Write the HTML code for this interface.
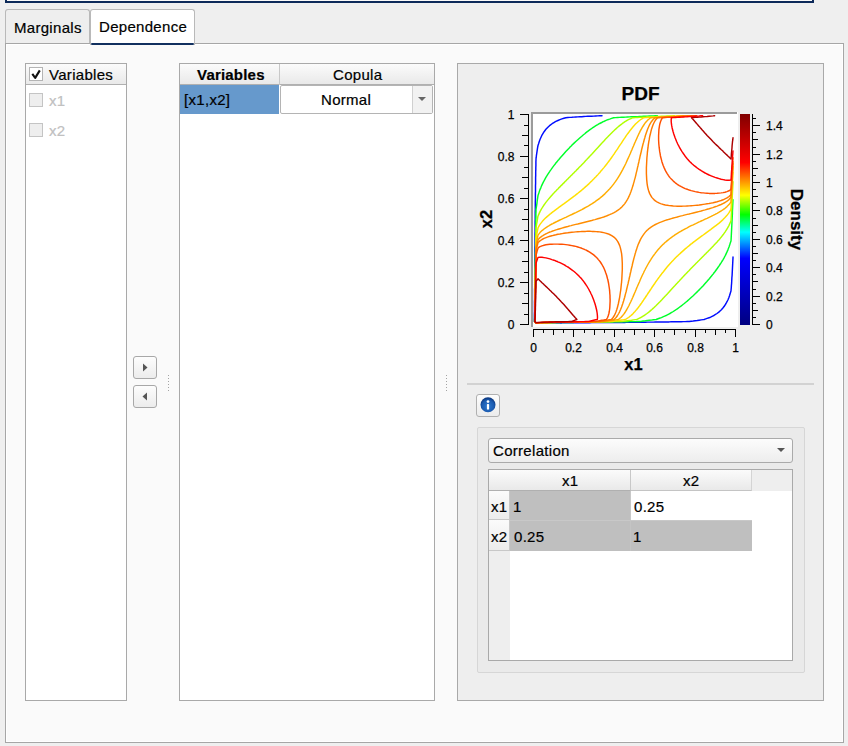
<!DOCTYPE html>
<html><head><meta charset="utf-8">
<style>
html,body{margin:0;padding:0}
body{width:848px;height:746px;overflow:hidden;background:#efefef;position:relative;font-family:"Liberation Sans",sans-serif;font-size:15px;color:#000}
.a{position:absolute;box-sizing:border-box}
.t{position:absolute;white-space:nowrap;line-height:1;letter-spacing:0.3px;-webkit-text-stroke:0.2px currentColor}
</style></head><body>
<!-- top navy frame -->
<div class="a" style="left:5px;top:-20px;width:809px;height:23px;border:2px solid #0d2a5a;background:#fafafa"></div>
<!-- tabs -->
<div class="a" style="left:5px;top:9px;width:85px;height:35px;background:#eeeeee;border:1px solid #b9b9b9;border-bottom:none;border-radius:3px 3px 0 0"></div>
<div class="t" style="left:14px;top:20px">Marginals</div>
<!-- panel -->
<div class="a" style="left:5px;top:43px;width:839px;height:700px;background:#fafafa;border:1px solid #a6a6a6;box-shadow:inset 0 0 0 1px #ffffff"></div>
<div class="a" style="left:90px;top:9px;width:105px;height:36px;background:#ffffff;border:1px solid #b9b9b9;border-bottom:none;border-radius:3px 3px 0 0"></div>
<div class="a" style="left:91px;top:42.5px;width:103px;height:2.5px;background:#12305f;border-radius:1px"></div>
<div class="t" style="left:99px;top:19px">Dependence</div>

<!-- left list -->
<div class="a" style="left:25px;top:63px;width:102px;height:638px;background:#fff;border:1px solid #a9a9a9"></div>
<div class="a" style="left:26px;top:64px;width:100px;height:21px;background:linear-gradient(#fbfbfb,#e9e9e9);border-bottom:1px solid #b0b0b0"></div>
<div class="a" style="left:29px;top:67px;width:14px;height:14px;background:#fff;border:1px solid #b4b4b4"></div>
<svg class="a" style="left:29px;top:67px" width="14" height="14"><path d="M3.3 6.9 L6.2 10.9 L10.8 3.4" fill="none" stroke="#111" stroke-width="2.1" stroke-linejoin="round"/></svg>
<div class="t" style="left:49px;top:67px">Variables</div>
<div class="a" style="left:29px;top:93px;width:14px;height:14px;background:#eeeeee;border:1px solid #c4c4c4"></div>
<div class="t" style="left:49px;top:93px;color:#c0c0c0">x1</div>
<div class="a" style="left:29px;top:123px;width:14px;height:14px;background:#eeeeee;border:1px solid #c4c4c4"></div>
<div class="t" style="left:49px;top:123px;color:#c0c0c0">x2</div>

<!-- arrow buttons -->
<div class="a" style="left:133px;top:356px;width:24px;height:23px;border:1px solid #a8a8a8;border-radius:3px;background:linear-gradient(#fdfdfd,#ececec)"></div>
<svg class="a" style="left:133px;top:356px" width="24" height="23"><path d="M10 7.5 L14.5 11.5 L10 15.5Z" fill="#555"/></svg>
<div class="a" style="left:133px;top:385px;width:24px;height:23px;border:1px solid #a8a8a8;border-radius:3px;background:linear-gradient(#fdfdfd,#ececec)"></div>
<svg class="a" style="left:133px;top:385px" width="24" height="23"><path d="M14 7.5 L9.5 11.5 L14 15.5Z" fill="#555"/></svg>
<svg class="a" style="left:166px;top:374px" width="4" height="20"><g fill="#a4a4a4"><rect x="2" y="1" width="1" height="1"/><rect x="2" y="4" width="1" height="1"/><rect x="2" y="7" width="1" height="1"/><rect x="2" y="10" width="1" height="1"/><rect x="2" y="13" width="1" height="1"/><rect x="2" y="16" width="1" height="1"/></g></svg>

<!-- middle table -->
<div class="a" style="left:179px;top:63px;width:256px;height:638px;background:#fff;border:1px solid #a9a9a9"></div>
<div class="a" style="left:180px;top:64px;width:254px;height:21px;background:linear-gradient(#fbfbfb,#e9e9e9);border-bottom:1px solid #b0b0b0"></div>
<div class="a" style="left:279px;top:64px;width:1px;height:21px;background:#c8c8c8"></div>
<div class="t" style="left:197px;top:67px;font-weight:bold;color:#000;letter-spacing:0.2px">Variables</div>
<div class="t" style="left:333px;top:67px">Copula</div>
<div class="a" style="left:180px;top:85px;width:99px;height:29px;background:#6699cc"></div>
<div class="t" style="left:184px;top:92px;color:#000">[x1,x2]</div>
<div class="a" style="left:280px;top:85px;width:153px;height:29px;background:#fff;border:1px solid #b4b4b4;border-radius:2px"></div>
<div class="a" style="left:412px;top:86px;width:1px;height:27px;background:#d0d0d0"></div>
<div class="a" style="left:413px;top:86px;width:19px;height:27px;background:#f2f2f2"></div>
<svg class="a" style="left:413px;top:86px" width="19" height="27"><path d="M5 11 L13 11 L9 15Z" fill="#666"/></svg>
<div class="t" style="left:321px;top:92px;color:#000">Normal</div>
<svg class="a" style="left:444px;top:374px" width="4" height="20"><g fill="#a4a4a4"><rect x="2" y="1" width="1" height="1"/><rect x="2" y="4" width="1" height="1"/><rect x="2" y="7" width="1" height="1"/><rect x="2" y="10" width="1" height="1"/><rect x="2" y="13" width="1" height="1"/><rect x="2" y="16" width="1" height="1"/></g></svg>

<!-- right group -->
<div class="a" style="left:457px;top:63px;width:367px;height:638px;background:#eeeeee;border:1px solid #a9a9a9"></div>
<!-- splitter line -->
<div class="a" style="left:467px;top:383px;width:347px;height:2px;background:#d2d2d2"></div>
<!-- info button -->
<div class="a" style="left:476px;top:394px;width:24px;height:23px;border:1px solid #b0b0b0;border-radius:3px;background:linear-gradient(#fdfdfd,#ececec)"></div>
<svg class="a" style="left:476px;top:394px" width="24" height="23"><defs><radialGradient id="ig" cx="0.5" cy="0.6" r="0.55"><stop offset="0" stop-color="#2f7ad0"/><stop offset="0.75" stop-color="#1b5aae"/><stop offset="1" stop-color="#0c3a84"/></radialGradient></defs><circle cx="12" cy="10.8" r="7.5" fill="url(#ig)"/><circle cx="12" cy="7.6" r="1.35" fill="#fff"/><rect x="10.9" y="10.1" width="2.2" height="5.4" rx="0.6" fill="#fff"/></svg>
<!-- correlation group -->
<div class="a" style="left:477px;top:427px;width:328px;height:246px;background:#eaeaea;border:1px solid #d6d6d6;border-radius:2px"></div>
<div class="a" style="left:488px;top:438px;width:305px;height:25px;border:1px solid #aaaaaa;border-radius:3px;background:linear-gradient(#fcfcfc,#ededed)"></div>
<div class="t" style="left:493px;top:443px;color:#000">Correlation</div>
<svg class="a" style="left:770px;top:440px" width="20" height="20"><path d="M7 8 L15 8 L11 12Z" fill="#555"/></svg>
<!-- corr table -->
<div class="a" style="left:488px;top:469px;width:305px;height:192px;background:#fff;border:1px solid #a9a9a9"></div>
<div class="a" style="left:489px;top:470px;width:303px;height:21px;background:#eeeeee"></div>
<div class="a" style="left:489px;top:470px;width:21px;height:21px;background:linear-gradient(#fbfbfb,#e9e9e9);border-bottom:1px solid #b0b0b0"></div>
<div class="a" style="left:489px;top:491px;width:21px;height:169px;background:#eeeeee"></div>
<div class="a" style="left:510px;top:470px;width:121px;height:21px;background:linear-gradient(#fbfbfb,#e9e9e9);border-right:1px solid #c8c8c8;border-bottom:1px solid #b0b0b0"></div>
<div class="a" style="left:631px;top:470px;width:121px;height:21px;background:linear-gradient(#fbfbfb,#e9e9e9);border-right:1px solid #d4d4d4;border-bottom:1px solid #c4c4c4"></div>
<div class="a" style="left:489px;top:491px;width:21px;height:29px;background:linear-gradient(#fbfbfb,#ececec);border-right:1px solid #c8c8c8;border-bottom:1px solid #c8c8c8"></div>
<div class="a" style="left:489px;top:520px;width:21px;height:31px;background:linear-gradient(#fbfbfb,#ececec);border-right:1px solid #c8c8c8;border-bottom:1px solid #c8c8c8"></div>
<div class="a" style="left:510px;top:491px;width:121px;height:29px;background:#bfbfbf;border-right:1px solid #c8c8c8"></div>
<div class="a" style="left:631px;top:491px;width:121px;height:29px;background:#ffffff"></div>
<div class="a" style="left:510px;top:520px;width:121px;height:31px;background:#bfbfbf;border-right:1px solid #c4c4c4;border-top:1px solid #c8c8c8"></div>
<div class="a" style="left:631px;top:520px;width:121px;height:31px;background:#bfbfbf;border-top:1px solid #c8c8c8"></div>
<div class="t" style="left:562px;top:473px;color:#000">x1</div>
<div class="t" style="left:683px;top:473px;color:#000">x2</div>
<div class="t" style="left:491px;top:499px;color:#000">x1</div>
<div class="t" style="left:491px;top:529px;color:#000">x2</div>
<div class="t" style="left:513px;top:499px;color:#000">1</div>
<div class="t" style="left:634px;top:499px;color:#000">0.25</div>
<div class="t" style="left:514px;top:529px;color:#000">0.25</div>
<div class="t" style="left:633px;top:529px;color:#000">1</div>

<!-- plot -->
<svg class="a" style="left:0;top:0" width="848" height="746">
<defs><linearGradient id="cb" x1="0" y1="1" x2="0" y2="0"><stop offset="0" stop-color="rgb(0,0,128)"/><stop offset="0.316" stop-color="rgb(0,0,255)"/><stop offset="0.44" stop-color="rgb(0,255,255)"/><stop offset="0.523" stop-color="rgb(0,255,0)"/><stop offset="0.615" stop-color="rgb(255,255,0)"/><stop offset="0.77" stop-color="rgb(255,0,0)"/><stop offset="1" stop-color="rgb(128,0,0)"/></linearGradient></defs>
<rect x="531" y="112" width="207" height="215" fill="#fff"/>
<rect x="531" y="112" width="2" height="215" fill="#9b9b9b"/>
<rect x="531" y="112" width="206" height="2" fill="#9b9b9b"/>
<g fill="none" stroke-width="1.45" stroke-linejoin="round" stroke-linecap="round"><path stroke="#000dff" d="M602 115.7 599.7 115.8 597.7 115.9 595.7 116 593.7 116.1 591.7 116.2 589.7 116.2 587.7 116.3 585.7 116.4 583.8 116.5 581.8 116.7 579.8 116.8 577.8 116.9 575.8 117 573.8 117.1 571.8 117.3 569.8 117.4 567.8 117.5 565.8 117.7 563.9 118.3 561.9 118.9 559.9 119.6 557.9 120.5 555.9 121.4 555.4 121.7 553.9 122.6 552.1 123.7 549.9 125.4 549.5 125.7 547.9 127.2 547.4 127.7 545.9 129.3 544.1 131.7 542.9 133.7 542 135.2 541.7 135.7 540.8 137.7 540 139.5 539.2 141.7 538.6 143.7 538 145.5 537.6 147.7 537.3 149.7 537 151.7 536.7 153.7 536.4 155.7 536.2 157.7 536 158.8 536 159.7 535.9 161.7 535.9 163.7 535.9 165.7 535.8 167.6 535.8 169.6 535.7 171.6 535.7 173.6 535.7 175.6 535.6 177.6 535.6 179.6 535.6 181.6 535.6 183.6 535.5 185.6 535.5 187.6 535.5 189.6 535.5 191.6 535.4 193.6 535.4 195.6 535.4 197.6 535.4 199.6 535.3 201.6 535.3 203.6 535.3 205.6 535.3 207.6 535.3 209.6 535.2 211.6 535.2 213.6 535.2 215.6 535.2 217.6 535.2 219.6 535.1 221.6 535.1 223.6 535.1 225.6 535.1 227.6 535.1 229.6 535.1 231.6 535 233.6 535 235.6 535 237.6 535 239.6 535 241.6 535 243.6 535 245.6 534.9 247.6 534.9 249.6 534.9 251.6 534.9 253.6 534.9 255.6 534.9 257.6 534.8 259.6 534.8 261.5 534.8 263.5 534.8 265.5 534.8 267.5 534.8 269.5 534.8 271.5 534.8 273.5 534.7 275.5 534.7 277.5 534.7 279.5 534.7 281.5 534.7 283.5 534.7 285.5 534.7 287.5 534.6 289.5 534.6 291.5 534.6 293.5 534.6 295.5 534.6 297.5 534.6 299.5 534.5 301.5 534.5 303.5 534.5 305.5 534.5 307.5 534.5 309.5 534.5 311.5 534.4 313.5 534.4 315.5 534.4 317.5 534.3 319.5 534.3 321.5 536 323.2 538 323.1 540 323.1 542 323.1 544 323 545.9 323 547.9 323 549.9 323 551.9 322.9 553.9 322.9 555.9 322.9 557.9 322.9 559.9 322.9 561.9 322.9 563.9 322.8 565.8 322.8 567.8 322.8 569.8 322.8 571.8 322.8 573.8 322.8 575.8 322.8 577.8 322.7 579.8 322.7 581.8 322.7 583.8 322.7 585.7 322.7 587.7 322.7 589.7 322.7 591.7 322.6 593.7 322.6 595.7 322.6 597.7 322.6 599.7 322.6 601.7 322.6 603.7 322.5 605.6 322.5 607.6 322.5 609.6 322.5 611.6 322.5 613.6 322.5 615.6 322.4 617.6 322.4 619.6 322.4 621.6 322.4 623.6 322.4 625.5 322.4 627.5 322.3 629.5 322.3 631.5 322.3 633.5 322.3 635.5 322.3 637.5 322.2 639.5 322.2 641.5 322.2 643.5 322.2 645.4 322.2 647.4 322.1 649.4 322.1 651.4 322.1 653.4 322.1 655.4 322 657.4 322 659.4 322 661.4 322 663.4 321.9 665.3 321.9 667.3 321.9 669.3 321.9 671.3 321.8 673.3 321.8 675.3 321.8 677.3 321.7 679.3 321.7 681.3 321.7 683.3 321.6 685.2 321.6 687.2 321.5 689.2 321.5 691.2 321.2 693.2 321 695.2 320.7 697.2 320.5 699.2 320.2 701.2 319.9 703.2 319.6 704.1 319.5 705.1 319.1 707.1 318.4 709.1 317.7 709.8 317.5 711.1 316.9 713.1 315.9 713.9 315.5 715.1 314.7 717 313.5 719.1 311.9 719.5 311.5 721.1 310 721.6 309.5 723.1 307.8 724.8 305.5 725 305.1 726 303.5 727 301.7 728.1 299.5 728.9 297.5 729.6 295.5 730.2 293.5 730.8 291.5 731 291 731.1 289.5 731.3 287.5 731.4 285.5 731.6 283.5 731.7 281.5 731.8 279.5 731.9 277.5 732.1 275.5 732.2 273.5 732.3 271.5 732.4 269.5 732.5 267.5 732.6 265.5 732.7 263.5 732.8 261.5 732.9 259.6 733 257.6 733 256.9"/><path stroke="#00ff2a" d="M657.4 115.7 655.4 115.8 653.4 115.9 651.4 116 649.4 116 647.4 116.1 645.4 116.2 643.5 116.3 641.5 116.4 639.5 116.5 637.5 116.6 635.5 116.7 633.5 116.7 631.5 116.8 629.5 116.9 627.5 117 625.5 117.1 623.6 117.2 621.6 117.3 619.6 117.4 617.6 117.5 615.6 117.6 613.6 117.7 611.6 118.4 609.6 119.1 607.7 119.7 605.6 120.6 603.7 121.5 603.2 121.7 601.7 122.5 599.7 123.5 599.3 123.7 597.7 124.7 595.9 125.7 593.7 127.1 592.8 127.7 591.7 128.5 590 129.7 587.7 131.4 587.3 131.7 585.7 132.9 584.8 133.7 583.8 134.5 582.3 135.7 581.8 136.2 580 137.7 577.8 139.7 575.8 141.5 573.8 143.4 571.8 145.3 571.5 145.7 569.8 147.3 569.5 147.7 567.8 149.4 565.8 151.5 563.9 153.7 562.1 155.7 560.3 157.7 559.9 158.2 558.7 159.7 557.9 160.6 557 161.7 555.9 163 555.4 163.7 553.9 165.6 552.4 167.6 551.9 168.3 551 169.6 549.9 171.1 549.6 171.6 548.3 173.6 547.9 174.2 547 175.6 545.9 177.4 544.7 179.6 544 180.9 543.6 181.6 542.6 183.6 542 184.9 541.7 185.6 540.9 187.6 540 189.6 539.3 191.6 538.7 193.6 538 195.6 537.7 197.6 537.4 199.6 537.1 201.6 536.9 203.6 536.6 205.6 536.3 207.6 536 209.4 536 211.6 535.9 213.6 535.9 215.6 535.9 217.6 535.8 219.6 535.8 221.6 535.8 223.6 535.8 225.6 535.7 227.6 535.7 229.6 535.7 231.6 535.7 233.6 535.6 235.6 535.6 237.6 535.6 239.6 535.6 241.6 535.5 243.6 535.5 245.6 535.5 247.6 535.5 249.6 535.4 251.6 535.4 253.6 535.4 255.6 535.4 257.6 535.3 259.6 535.3 261.5 535.3 263.5 535.3 265.5 535.3 267.5 535.2 269.5 535.2 271.5 535.2 273.5 535.2 275.5 535.1 277.5 535.1 279.5 535.1 281.5 535.1 283.5 535.1 285.5 535 287.5 535 289.5 535 291.5 535 293.5 534.9 295.5 534.9 297.5 534.9 299.5 534.9 301.5 534.8 303.5 534.8 305.5 534.8 307.5 534.8 309.5 534.7 311.5 534.7 313.5 534.6 315.5 534.6 317.5 534.6 319.5 534.5 321.5 536 323 538 322.9 540 322.9 542 322.8 544 322.8 545.9 322.7 547.9 322.7 549.9 322.7 551.9 322.6 553.9 322.6 555.9 322.6 557.9 322.6 559.9 322.5 561.9 322.5 563.9 322.5 565.8 322.4 567.8 322.4 569.8 322.4 571.8 322.4 573.8 322.4 575.8 322.3 577.8 322.3 579.8 322.3 581.8 322.3 583.8 322.2 585.7 322.2 587.7 322.2 589.7 322.2 591.7 322.1 593.7 322.1 595.7 322.1 597.7 322.1 599.7 322 601.7 322 603.7 322 605.6 322 607.6 321.9 609.6 321.9 611.6 321.9 613.6 321.9 615.6 321.8 617.6 321.8 619.6 321.8 621.6 321.8 623.6 321.7 625.5 321.7 627.5 321.7 629.5 321.6 631.5 321.6 633.5 321.6 635.5 321.6 637.5 321.5 639.5 321.5 641.5 321.3 643.5 321 645.4 320.8 647.4 320.5 649.4 320.3 651.4 320.1 653.4 319.8 655.4 319.6 656.2 319.5 657.4 319 659.4 318.3 661.4 317.6 663.4 316.7 665.3 315.8 666.1 315.5 667.3 314.9 669.3 313.8 669.9 313.5 671.3 312.7 673.3 311.5 675.3 310.2 676.3 309.5 677.3 308.8 679.1 307.5 681.3 305.9 681.8 305.5 683.3 304.3 684.3 303.5 685.2 302.7 686.7 301.5 687.2 301.1 689 299.5 691.2 297.5 693.2 295.7 695.2 293.8 697.2 291.9 697.5 291.5 699.2 289.9 699.5 289.5 701.2 287.8 703.2 285.7 705.1 283.5 706.9 281.5 708.6 279.5 709.1 279 710.3 277.5 711.1 276.6 711.9 275.5 713.1 274.1 713.5 273.5 715.1 271.5 716.5 269.5 717.1 268.8 717.9 267.5 719.1 265.9 720.6 263.5 721.1 262.9 721.9 261.5 723.1 259.6 724.2 257.6 725 256 725.3 255.6 726.2 253.6 727 251.9 728 249.6 728.8 247.6 729 247.1 729.5 245.6 730.1 243.6 730.8 241.6 731 241 731.1 239.6 731.2 237.6 731.3 235.6 731.4 233.6 731.5 231.6 731.6 229.6 731.7 227.6 731.8 225.6 731.9 223.6 732 221.6 732.1 219.6 732.2 217.6 732.3 215.6 732.4 213.6 732.4 211.6 732.5 209.6 732.6 207.6 732.7 205.6 732.8 203.6 732.9 201.6 733 199.7"/><path stroke="#b0ff00" d="M674.3 115.7 673.3 115.8 671.3 115.9 669.3 115.9 667.3 116 665.3 116.1 663.4 116.2 661.4 116.3 659.4 116.4 657.4 116.5 655.4 116.6 653.4 116.7 651.4 116.8 649.4 116.9 647.4 117 645.4 117.1 643.5 117.2 641.5 117.3 639.5 117.4 637.5 117.5 635.5 117.6 633.5 117.7 632.7 117.7 631.5 118.3 629.5 119.2 628.4 119.7 627.5 120.2 625.5 121.4 625 121.7 623.6 122.7 622.1 123.7 621.6 124.1 619.6 125.6 617.6 127.3 617.1 127.7 615.6 129.1 614.9 129.7 613.6 131 612.8 131.7 611.6 132.9 610.8 133.7 609.6 134.9 608.8 135.7 607.6 137 606.9 137.7 605.6 139.1 605 139.7 603.7 141.2 603.2 141.7 601.7 143.3 601.3 143.7 599.7 145.5 597.7 147.7 595.8 149.7 594 151.7 592.2 153.7 591.7 154.2 590.3 155.7 589.7 156.3 588.5 157.7 587.7 158.4 586.6 159.7 585.7 160.6 584.7 161.7 583.8 162.7 582.8 163.7 581.8 164.7 580.9 165.7 579.8 166.8 579 167.6 577.8 168.9 577 169.6 575.8 170.9 575.1 171.6 573.8 172.9 573.1 173.6 571.8 174.9 571.1 175.6 569.8 176.9 569.1 177.6 567.8 178.9 567.1 179.6 565.8 180.9 565.1 181.6 563.9 182.9 563.1 183.6 561.9 184.9 561.1 185.6 559.9 186.9 559.1 187.6 557.9 188.9 557.2 189.6 555.9 191 555.3 191.6 553.9 193.1 553.4 193.6 551.9 195.2 551.6 195.6 549.9 197.5 548.1 199.6 546.5 201.6 545.9 202.3 545 203.6 544 205 543.6 205.6 542.3 207.6 542 208 541.1 209.6 540 211.6 539.1 213.6 538.2 215.6 538 216 537.7 217.6 537.4 219.6 537.1 221.6 536.7 223.6 536.4 225.6 536 227.6 536 229.6 535.9 231.6 535.9 233.6 535.9 235.6 535.8 237.6 535.8 239.6 535.8 241.6 535.8 243.6 535.7 245.6 535.7 247.6 535.7 249.6 535.7 251.6 535.6 253.6 535.6 255.6 535.6 257.6 535.6 259.6 535.5 261.5 535.5 263.5 535.5 265.5 535.4 267.5 535.4 269.5 535.4 271.5 535.4 273.5 535.3 275.5 535.3 277.5 535.3 279.5 535.3 281.5 535.2 283.5 535.2 285.5 535.2 287.5 535.2 289.5 535.1 291.5 535.1 293.5 535.1 295.5 535.1 297.5 535 299.5 535 301.5 535 303.5 534.9 305.5 534.9 307.5 534.9 309.5 534.8 311.5 534.8 313.5 534.7 315.5 534.7 317.5 534.6 319.5 534.6 321.5 536 322.9 538 322.8 540 322.8 542 322.7 544 322.7 545.9 322.6 547.9 322.6 549.9 322.5 551.9 322.5 553.9 322.5 555.9 322.4 557.9 322.4 559.9 322.4 561.9 322.3 563.9 322.3 565.8 322.3 567.8 322.3 569.8 322.2 571.8 322.2 573.8 322.2 575.8 322.2 577.8 322.1 579.8 322.1 581.8 322.1 583.8 322 585.7 322 587.7 322 589.7 322 591.7 321.9 593.7 321.9 595.7 321.9 597.7 321.8 599.7 321.8 601.7 321.8 603.7 321.8 605.6 321.7 607.6 321.7 609.6 321.7 611.6 321.6 613.6 321.6 615.6 321.6 617.6 321.6 619.6 321.5 621.6 321.5 623.6 321.3 625.5 321 627.5 320.7 629.5 320.4 631.5 320.2 633.5 319.9 635.5 319.6 636.7 319.5 637.5 319.1 639.5 318.1 640.9 317.5 641.5 317.1 643.5 315.9 644.2 315.5 645.4 314.6 647 313.5 647.4 313.2 649.4 311.6 651.4 309.9 651.9 309.5 653.4 308.1 654.1 307.5 655.4 306.2 656.2 305.5 657.4 304.3 658.2 303.5 659.4 302.3 660.2 301.5 661.4 300.2 662.1 299.5 663.4 298.1 663.9 297.5 665.3 296 665.8 295.5 667.3 293.9 667.7 293.5 669.3 291.7 671.3 289.5 673.1 287.5 675 285.5 676.8 283.5 677.3 283 678.7 281.5 679.3 280.9 680.5 279.5 681.3 278.7 682.4 277.5 683.3 276.6 684.3 275.5 685.2 274.5 686.2 273.5 687.2 272.4 688.1 271.5 689.2 270.4 690 269.5 691.2 268.3 692 267.5 693.2 266.3 694 265.5 695.2 264.3 695.9 263.5 697.2 262.3 697.9 261.5 699.2 260.3 699.9 259.6 701.2 258.3 701.9 257.6 703.2 256.3 703.9 255.6 705.1 254.3 705.9 253.6 707.1 252.3 707.9 251.6 709.1 250.3 709.9 249.6 711.1 248.3 711.8 247.6 713.1 246.2 713.7 245.6 715.1 244.1 715.6 243.6 717.1 242 717.4 241.6 719.1 239.7 720.8 237.6 721.1 237.3 722.4 235.6 723.1 234.8 723.9 233.6 725 232.1 725.3 231.6 726.6 229.6 727 229 727.8 227.6 728.9 225.6 729.8 223.6 730.7 221.6 731 220.9 731.1 219.6 731.2 217.6 731.3 215.6 731.4 213.6 731.5 211.6 731.6 209.6 731.7 207.6 731.8 205.6 731.9 203.6 732 201.6 732.1 199.6 732.2 197.6 732.3 195.6 732.4 193.6 732.5 191.6 732.6 189.6 732.7 187.6 732.8 185.6 732.9 183.6 733 181.8"/><path stroke="#ffe000" d="M683.1 115.7 681.3 115.8 679.3 115.9 677.3 116 675.3 116.1 673.3 116.2 671.3 116.3 669.3 116.4 667.3 116.5 665.3 116.6 663.4 116.7 661.4 116.8 659.4 116.9 657.4 117 655.4 117.1 653.4 117.2 651.4 117.3 649.4 117.4 647.4 117.5 645.4 117.6 643.7 117.7 641.5 119.1 640.5 119.7 639.5 120.5 638 121.7 637.5 122.2 635.8 123.7 635.5 124.1 634 125.7 633.5 126.3 632.3 127.7 631.5 128.7 630.7 129.7 629.5 131.2 629.2 131.7 627.7 133.7 626.3 135.7 625.5 136.8 625 137.7 623.6 139.7 622.3 141.7 621.6 142.8 621 143.7 619.6 145.7 618.3 147.7 617.6 148.8 617 149.7 615.6 151.7 614.3 153.7 613.6 154.6 612.9 155.7 611.6 157.5 610 159.7 609.6 160.2 608.5 161.7 607.6 162.9 607 163.7 605.6 165.5 603.9 167.6 602.2 169.6 601.7 170.3 600.5 171.6 599.7 172.7 598.8 173.6 597.7 174.9 597 175.6 595.7 177 595.1 177.6 593.7 179.1 593.2 179.6 591.7 181.1 591.1 181.6 589.7 183 589.1 183.6 587.7 184.9 586.9 185.6 585.7 186.6 584.6 187.6 583.8 188.4 582.3 189.6 581.8 190.1 579.9 191.6 577.8 193.3 577.4 193.6 575.8 194.9 574.9 195.6 573.8 196.4 572.2 197.6 571.8 197.9 569.8 199.4 567.8 200.9 566.8 201.6 565.8 202.3 564.1 203.6 561.9 205.2 561.3 205.6 559.9 206.6 558.5 207.6 557.9 208.1 555.9 209.6 553.9 211.1 553.2 211.6 551.9 212.6 550.7 213.6 549.9 214.2 548.3 215.6 547.9 215.9 546 217.6 544 219.6 542.2 221.6 540.6 223.6 540 224.4 539.3 225.6 538.1 227.6 537.7 229.6 537.3 231.6 536.9 233.6 536.5 235.6 536.1 237.6 536 239.6 535.9 241.6 535.9 243.6 535.9 245.6 535.9 247.6 535.8 249.6 535.8 251.6 535.8 253.6 535.7 255.6 535.7 257.6 535.7 259.6 535.7 261.5 535.6 263.5 535.6 265.5 535.6 267.5 535.5 269.5 535.5 271.5 535.5 273.5 535.5 275.5 535.4 277.5 535.4 279.5 535.4 281.5 535.3 283.5 535.3 285.5 535.3 287.5 535.3 289.5 535.2 291.5 535.2 293.5 535.2 295.5 535.1 297.5 535.1 299.5 535.1 301.5 535.1 303.5 535 305.5 535 307.5 534.9 309.5 534.9 311.5 534.9 313.5 534.8 315.5 534.8 317.5 534.7 319.5 534.6 321.5 536 322.8 538 322.8 540 322.7 542 322.6 544 322.6 545.9 322.5 547.9 322.5 549.9 322.5 551.9 322.4 553.9 322.4 555.9 322.4 557.9 322.3 559.9 322.3 561.9 322.3 563.9 322.2 565.8 322.2 567.8 322.2 569.8 322.1 571.8 322.1 573.8 322.1 575.8 322 577.8 322 579.8 322 581.8 322 583.8 321.9 585.7 321.9 587.7 321.9 589.7 321.8 591.7 321.8 593.7 321.8 595.7 321.7 597.7 321.7 599.7 321.7 601.7 321.7 603.7 321.6 605.6 321.6 607.6 321.6 609.6 321.5 611.6 321.5 612.2 321.5 613.6 321.3 615.6 320.9 617.6 320.6 619.6 320.3 621.6 320 623.6 319.8 625.5 319.5 627.5 318.2 628.6 317.5 629.5 316.7 631.1 315.5 631.5 315.1 633.2 313.5 633.5 313.1 635 311.5 635.5 310.9 636.7 309.5 637.5 308.5 638.3 307.5 639.5 305.9 639.8 305.5 641.2 303.5 641.5 303.1 642.6 301.5 643.5 300.2 643.9 299.5 645.3 297.5 646.6 295.5 647.4 294.3 647.9 293.5 649.3 291.5 650.6 289.5 651.4 288.3 651.9 287.5 653.3 285.5 654.7 283.5 655.4 282.4 656 281.5 657.4 279.6 658.9 277.5 659.4 276.9 660.4 275.5 661.4 274.2 661.9 273.5 663.4 271.7 665.1 269.5 666.7 267.5 667.3 266.8 668.4 265.5 669.3 264.5 670.2 263.5 671.3 262.3 672 261.5 673.3 260.2 673.9 259.6 675.3 258.1 675.8 257.6 677.3 256.1 677.9 255.6 679.3 254.2 680 253.6 681.3 252.4 682.2 251.6 683.3 250.6 684.4 249.6 685.2 248.9 686.8 247.6 687.2 247.2 689.2 245.6 691.2 243.9 691.7 243.6 693.2 242.4 694.2 241.6 695.2 240.9 696.9 239.6 699.2 237.9 699.6 237.6 701.2 236.4 702.3 235.6 703.2 235 705.1 233.6 707.1 232.1 707.8 231.6 709.1 230.7 710.6 229.6 711.1 229.2 713.1 227.7 715.1 226.2 715.9 225.6 717.1 224.7 718.4 223.6 719.1 223.1 720.8 221.6 723 219.6 725 217.6 726.8 215.6 728.3 213.6 729 212.6 729.6 211.6 730.8 209.6 731.1 207.6 731.2 205.6 731.3 203.6 731.4 201.6 731.5 199.6 731.6 197.6 731.7 195.6 731.8 193.6 731.9 191.6 732 189.6 732.2 187.6 732.3 185.6 732.4 183.6 732.5 181.6 732.6 179.6 732.7 177.6 732.8 175.6 732.9 173.6 733 172.3"/><path stroke="#ffad00" d="M688.3 115.7 687.2 115.8 685.2 115.9 683.3 116 681.3 116.1 679.3 116.2 677.3 116.3 675.3 116.4 673.3 116.5 671.3 116.6 669.3 116.7 667.3 116.8 665.3 116.9 663.4 117 661.4 117.2 659.4 117.3 657.4 117.4 655.4 117.5 653.4 117.6 651.4 117.7 650.6 117.7 649.4 118.7 648.1 119.7 647.4 120.5 646.2 121.7 645.4 122.7 644.7 123.7 643.5 125.5 642.1 127.7 641.5 128.8 641 129.7 639.9 131.7 639.5 132.6 638.9 133.7 638 135.7 637.5 136.8 637.1 137.7 636.2 139.7 635.5 141.2 635.3 141.7 634.4 143.7 633.6 145.7 632.7 147.7 631.9 149.7 631.5 150.6 631 151.7 630.2 153.7 629.5 155.2 629.3 155.7 628.4 157.7 627.5 159.6 626.6 161.7 625.7 163.7 624.7 165.7 623.7 167.6 622.7 169.6 621.6 171.6 620.5 173.6 619.6 175.2 619.3 175.6 618.1 177.6 617.6 178.4 616.8 179.6 615.6 181.4 613.9 183.6 613.6 184.1 612.4 185.6 611.6 186.6 610.8 187.6 609.6 188.9 609 189.6 607.6 191.1 607.1 191.6 605.6 193.1 605.1 193.6 603.7 194.9 602.9 195.6 601.7 196.7 600.5 197.6 599.7 198.3 597.9 199.6 595.7 201.2 595.2 201.6 593.7 202.6 592.2 203.6 591.7 203.9 589.7 205.1 588.9 205.6 587.7 206.3 585.7 207.4 583.8 208.5 581.8 209.6 579.8 210.6 577.8 211.6 575.8 212.6 573.8 213.5 571.8 214.5 569.8 215.4 567.8 216.3 565.8 217.3 565.1 217.6 563.9 218.2 561.9 219.1 560.8 219.6 559.9 220 557.9 221 556.7 221.6 555.9 222 553.9 223 552.8 223.6 551.9 224 549.9 225.1 549.2 225.6 547.9 226.3 546 227.6 544 229 543.3 229.6 542 230.6 541 231.6 540 232.6 539.2 233.6 538 235.1 537.9 235.6 537.5 237.6 537.1 239.6 536.7 241.6 536.2 243.6 536 244.4 536 245.6 535.9 247.6 535.9 249.6 535.9 251.6 535.9 253.6 535.8 255.6 535.8 257.6 535.8 259.6 535.7 261.5 535.7 263.5 535.7 265.5 535.6 267.5 535.6 269.5 535.6 271.5 535.6 273.5 535.5 275.5 535.5 277.5 535.5 279.5 535.4 281.5 535.4 283.5 535.4 285.5 535.4 287.5 535.3 289.5 535.3 291.5 535.3 293.5 535.2 295.5 535.2 297.5 535.2 299.5 535.1 301.5 535.1 303.5 535.1 305.5 535 307.5 535 309.5 534.9 311.5 534.9 313.5 534.9 315.5 534.8 317.5 534.7 319.5 534.7 321.5 536 322.8 538 322.7 540 322.7 542 322.6 544 322.5 545.9 322.5 547.9 322.5 549.9 322.4 551.9 322.4 553.9 322.3 555.9 322.3 557.9 322.3 559.9 322.2 561.9 322.2 563.9 322.2 565.8 322.1 567.8 322.1 569.8 322.1 571.8 322 573.8 322 575.8 322 577.8 321.9 579.8 321.9 581.8 321.9 583.8 321.8 585.7 321.8 587.7 321.8 589.7 321.7 591.7 321.7 593.7 321.7 595.7 321.7 597.7 321.6 599.7 321.6 601.7 321.6 603.7 321.5 605.6 321.5 607.6 321.2 609.6 320.9 611.6 320.6 613.6 320.2 615.6 319.9 617.6 319.6 618.5 319.5 619.6 318.5 620.9 317.5 621.6 316.7 622.7 315.5 623.6 314.4 624.3 313.5 625.5 311.6 626.8 309.5 627.5 308.2 627.9 307.5 629 305.5 629.5 304.3 629.9 303.5 630.9 301.5 631.5 300.1 631.8 299.5 632.7 297.5 633.5 295.6 634.4 293.5 635.3 291.5 635.5 290.9 636.1 289.5 636.9 287.5 637.5 286.3 637.8 285.5 638.7 283.5 639.5 281.7 640.4 279.5 641.3 277.5 642.2 275.5 643.2 273.5 643.5 273 644.1 271.5 645.2 269.5 645.4 269 646.2 267.5 647.3 265.5 648.4 263.5 649.4 261.8 650.8 259.6 651.4 258.6 652.1 257.6 653.4 255.7 655 253.6 655.4 253 656.5 251.6 657.4 250.5 658.2 249.6 659.4 248.2 660 247.6 661.4 246.1 661.9 245.6 663.4 244.1 664 243.6 665.3 242.3 666.2 241.6 667.3 240.6 668.6 239.6 669.3 239 671.2 237.6 673.3 236 674 235.6 675.3 234.7 677 233.6 679.3 232.2 680.3 231.6 681.3 231 683.3 229.9 683.8 229.6 685.2 228.8 687.2 227.8 689.2 226.7 691.2 225.7 693.2 224.8 695.2 223.8 695.7 223.6 697.2 222.9 699.2 221.9 699.9 221.6 701.2 221 703.2 220.1 704.2 219.6 705.1 219.2 707.1 218.3 708.5 217.6 709.1 217.3 711.1 216.4 712.6 215.6 713.1 215.4 715.1 214.4 716.5 213.6 717.1 213.3 719.1 212.2 720 211.6 721.1 211 723.1 209.7 725 208.3 725.8 207.6 727 206.6 728 205.6 729 204.6 729.7 203.6 731 202 731.1 199.6 731.2 197.6 731.4 195.6 731.5 193.6 731.6 191.6 731.7 189.6 731.8 187.6 731.9 185.6 732 183.6 732.1 181.6 732.2 179.6 732.4 177.6 732.5 175.6 732.6 173.6 732.7 171.6 732.8 169.6 732.9 167.6 733 166.7"/><path stroke="#ff8d00" d="M691.4 115.7 689.2 115.8 687.2 116 685.2 116.1 683.3 116.2 681.3 116.3 679.3 116.4 677.3 116.5 675.3 116.6 673.3 116.7 671.3 116.8 669.3 116.9 667.3 117.1 665.3 117.2 663.4 117.3 661.4 117.4 659.4 117.5 657.4 117.6 655.4 117.7 653.4 119.2 652.9 119.7 651.4 121.7 650.2 123.7 649.4 125.1 649.1 125.7 648.2 127.7 647.4 129.7 646.7 131.7 646 133.7 645.4 135.5 644.8 137.7 644.2 139.7 643.7 141.7 643.5 142.5 643.1 143.7 642.6 145.7 642.1 147.7 641.6 149.7 641.5 150.5 641.2 151.7 640.7 153.7 640.2 155.7 639.8 157.7 639.5 159.1 639.3 159.7 638.9 161.7 638.4 163.7 638 165.7 637.5 167.6 637.1 169.6 636.6 171.6 636.1 173.6 635.7 175.6 635.5 176.3 635.2 177.6 634.6 179.6 634.1 181.6 633.5 183.6 633 185.6 632.3 187.6 631.7 189.6 631.5 190.1 631 191.6 630.2 193.6 629.5 195.2 629.3 195.6 628.4 197.6 627.5 199.3 626.1 201.6 625.5 202.5 624.8 203.6 623.6 205.1 623.1 205.6 621.6 207.2 621.1 207.6 619.6 209 618.7 209.6 617.6 210.4 615.8 211.6 613.6 212.8 612 213.6 609.6 214.7 607.6 215.5 605.6 216.3 603.7 217 601.7 217.6 599.7 218.2 597.7 218.8 595.7 219.4 595 219.6 593.7 219.9 591.7 220.5 589.7 221 587.7 221.5 585.7 222 583.8 222.5 581.8 223 579.8 223.5 577.8 224 575.8 224.4 573.8 224.9 571.8 225.4 571.2 225.6 569.8 225.9 567.8 226.5 565.8 227 563.9 227.5 561.9 228.1 559.9 228.7 557.9 229.3 556.9 229.6 555.9 229.9 553.9 230.6 551.9 231.3 551.2 231.6 549.9 232 547.9 232.9 546.5 233.6 545.9 233.8 544 234.9 542.9 235.6 542 236.1 540.1 237.6 538.2 239.6 537.6 241.6 537.2 243.6 536.7 245.6 536.2 247.6 536 248.4 536 249.6 535.9 251.6 535.9 253.6 535.9 255.6 535.9 257.6 535.8 259.6 535.8 261.5 535.8 263.5 535.7 265.5 535.7 267.5 535.7 269.5 535.6 271.5 535.6 273.5 535.6 275.5 535.6 277.5 535.5 279.5 535.5 281.5 535.5 283.5 535.4 285.5 535.4 287.5 535.4 289.5 535.3 291.5 535.3 293.5 535.3 295.5 535.2 297.5 535.2 299.5 535.2 301.5 535.1 303.5 535.1 305.5 535.1 307.5 535 309.5 535 311.5 534.9 313.5 534.9 315.5 534.8 317.5 534.7 319.5 534.7 321.5 536 322.8 538 322.7 540 322.6 542 322.6 544 322.5 545.9 322.5 547.9 322.4 549.9 322.4 551.9 322.3 553.9 322.3 555.9 322.3 557.9 322.2 559.9 322.2 561.9 322.2 563.9 322.1 565.8 322.1 567.8 322 569.8 322 571.8 322 573.8 322 575.8 321.9 577.8 321.9 579.8 321.9 581.8 321.8 583.8 321.8 585.7 321.8 587.7 321.7 589.7 321.7 591.7 321.7 593.7 321.6 595.7 321.6 597.7 321.6 599.7 321.5 601.7 321.5 602.4 321.5 603.7 321.3 605.6 320.9 607.6 320.5 609.6 320.2 611.6 319.9 613.6 319.6 614.1 319.5 615.6 317.9 616.1 317.5 617.5 315.5 618.7 313.5 619.6 311.8 620.6 309.5 621.4 307.5 621.6 307 622.1 305.5 622.8 303.5 623.4 301.5 623.6 301 624 299.5 624.6 297.5 625.1 295.5 625.5 293.9 626.2 291.5 626.6 289.5 627.1 287.5 627.5 285.8 628.1 283.5 628.5 281.5 629 279.5 629.4 277.5 629.9 275.5 630.3 273.5 630.8 271.5 631.2 269.5 631.5 268.3 631.7 267.5 632.2 265.5 632.6 263.5 633.1 261.5 633.5 260 634.1 257.6 634.7 255.6 635.2 253.6 635.5 252.7 635.8 251.6 636.5 249.6 637.1 247.6 637.5 246.6 637.8 245.6 638.6 243.6 639.5 241.6 640.4 239.6 641.5 237.7 642.8 235.6 643.5 234.6 644.2 233.6 645.4 232.1 645.9 231.6 647.4 230 647.9 229.6 649.4 228.3 650.4 227.6 651.4 226.9 653.4 225.6 655.4 224.5 657.3 223.6 659.4 222.7 661.4 221.9 662.1 221.6 663.4 221.1 665.3 220.4 667.3 219.8 668 219.6 669.3 219.2 671.3 218.6 673.3 218 674.9 217.6 677.3 217 679.3 216.4 681.3 215.9 682.6 215.6 683.3 215.4 685.2 214.9 687.2 214.4 689.2 214 690.7 213.6 693.2 213 695.2 212.5 697.2 212 698.7 211.6 701.2 211 703.2 210.4 705.1 209.9 706.1 209.6 707.1 209.3 709.1 208.8 711.1 208.1 712.8 207.6 715.1 206.8 717.1 206.1 718.3 205.6 719.1 205.3 721.1 204.5 722.9 203.6 725 202.5 726.3 201.6 727 201.2 729 199.6 730.8 197.6 731.1 195.6 731.2 193.6 731.3 191.6 731.4 189.6 731.6 187.6 731.7 185.6 731.8 183.6 731.9 181.6 732 179.6 732.1 177.6 732.2 175.6 732.4 173.6 732.5 171.6 732.6 169.6 732.7 167.6 732.8 165.7 733 163.7"/><path stroke="#ff7800" d="M534.7 321.5 536 322.8 538 322.7 540 322.6 542 322.6 544 322.5 545.9 322.4 547.9 322.4 549.9 322.4 551.9 322.3 553.9 322.3 555.9 322.2 557.9 322.2 559.9 322.2 561.9 322.1 563.9 322.1 565.8 322.1 567.8 322 569.8 322 571.8 322 573.8 321.9 575.8 321.9 577.8 321.9 579.8 321.8 581.8 321.8 583.8 321.8 585.7 321.7 587.7 321.7 589.7 321.7 591.7 321.6 593.7 321.6 595.7 321.6 597.7 321.5 599.7 321.5 601.7 321.2 603.7 320.8 605.6 320.5 607.6 320.1 609.6 319.8 611.5 319.5 613.1 317.5 613.6 316.7 614.4 315.5 615.3 313.5 615.6 312.8 616.1 311.5 616.8 309.5 617.4 307.5 617.6 306.8 617.9 305.5 618.4 303.5 618.8 301.5 619.2 299.5 619.6 297.6 619.9 295.5 620.2 293.5 620.5 291.5 620.8 289.5 621 287.5 621.2 285.5 621.4 283.5 621.6 282.1 621.6 281.5 621.8 279.5 621.9 277.5 622 275.5 622.1 273.5 622.2 271.5 622.3 269.5 622.3 267.5 622.3 265.5 622.3 263.5 622.2 261.5 622.1 259.6 622 257.6 621.8 255.6 621.6 253.7 621.2 251.6 620.8 249.6 620.3 247.6 619.7 245.6 618.8 243.6 617.8 241.6 616.4 239.6 615.6 238.7 614.5 237.6 613.6 236.9 611.7 235.6 609.6 234.5 607.6 233.7 605.6 233.1 603.7 232.6 601.7 232.2 599.7 231.9 597.7 231.7 596.2 231.6 593.7 231.4 591.7 231.4 589.7 231.3 587.7 231.3 585.7 231.4 583.8 231.4 581.8 231.5 580.3 231.6 577.8 231.7 575.8 231.9 573.8 232.1 571.8 232.3 569.8 232.5 567.8 232.8 565.8 233 563.9 233.3 562.2 233.6 559.9 234 557.9 234.3 555.9 234.8 553.9 235.2 552.5 235.6 551.9 235.7 549.9 236.3 547.9 236.9 546.1 237.6 544 238.4 542 239.5 540 240.8 539.1 241.6 538 242.5 537.8 243.6 537.3 245.6 536.8 247.6 536.3 249.6 536 250.7 536 251.6 535.9 253.6 535.9 255.6 535.9 257.6 535.9 259.6 535.8 261.5 535.8 263.5 535.8 265.5 535.7 267.5 535.7 269.5 535.7 271.5 535.6 273.5 535.6 275.5 535.6 277.5 535.6 279.5 535.5 281.5 535.5 283.5 535.5 285.5 535.4 287.5 535.4 289.5 535.4 291.5 535.3 293.5 535.3 295.5 535.3 297.5 535.2 299.5 535.2 301.5 535.2 303.5 535.1 305.5 535.1 307.5 535 309.5 535 311.5 534.9 313.5 534.9 315.5 534.8 317.5 534.8 319.5 534.7 321.5M693.3 115.7 691.2 115.8 689.2 116 687.2 116.1 685.2 116.2 683.3 116.3 681.3 116.4 679.3 116.5 677.3 116.6 675.3 116.8 673.3 116.9 671.3 117 669.3 117.1 667.3 117.2 665.3 117.3 663.4 117.4 661.4 117.5 659.4 117.6 657.5 117.7 655.8 119.7 655.4 120.3 654.5 121.7 653.5 123.7 652.7 125.7 652 127.7 651.4 129.6 650.9 131.7 650.4 133.7 649.9 135.7 649.5 137.7 649.4 138.3 649.2 139.7 648.8 141.7 648.5 143.7 648.2 145.7 648 147.7 647.7 149.7 647.5 151.7 647.4 152.3 647.3 153.7 647.1 155.7 646.9 157.7 646.8 159.7 646.7 161.7 646.6 163.7 646.5 165.7 646.4 167.6 646.4 169.6 646.4 171.6 646.4 173.6 646.5 175.6 646.6 177.6 646.7 179.6 646.9 181.6 647.1 183.6 647.4 185.6 647.8 187.6 648.3 189.6 648.9 191.6 649.4 192.9 649.7 193.6 650.8 195.6 651.4 196.7 652.1 197.6 653.4 199.1 653.9 199.6 655.4 200.9 656.5 201.6 657.4 202.1 659.4 203.1 660.6 203.6 661.4 203.9 663.4 204.5 665.3 205 667.3 205.3 669.3 205.6 671.3 205.8 673.3 206 675.3 206.1 677.3 206.2 679.3 206.2 681.3 206.2 683.3 206.1 685.2 206.1 687.2 206 689.2 205.9 691.2 205.7 692.7 205.6 695.2 205.4 697.2 205.2 699.2 205 701.2 204.7 703.2 204.4 705.1 204.1 707.1 203.8 708.3 203.6 709.1 203.5 711.1 203.1 713.1 202.7 715.1 202.2 717.1 201.7 719.1 201.1 721.1 200.5 723.1 199.8 725 198.9 727 197.9 727.4 197.6 729 196.5 730 195.6 731 194.7 731.1 193.6 731.2 191.6 731.3 189.6 731.4 187.6 731.5 185.6 731.6 183.6 731.8 181.6 731.9 179.6 732 177.6 732.1 175.6 732.2 173.6 732.3 171.6 732.5 169.6 732.6 167.6 732.7 165.7 732.8 163.7 733 161.7"/><path stroke="#ff5000" d="M534.7 321.5 536 322.8 538 322.7 540 322.6 542 322.5 544 322.5 545.9 322.4 547.9 322.4 549.9 322.3 551.9 322.3 553.9 322.2 555.9 322.2 557.9 322.1 559.9 322.1 561.9 322.1 563.9 322 565.8 322 567.8 322 569.8 321.9 571.8 321.9 573.8 321.9 575.8 321.8 577.8 321.8 579.8 321.8 581.8 321.7 583.8 321.7 585.7 321.7 587.7 321.6 589.7 321.6 591.7 321.6 593.7 321.5 595.7 321.5 597.7 321.1 599.7 320.7 601.7 320.3 603.7 320 605.6 319.6 606.4 319.5 607.6 317.5 608.3 315.5 608.9 313.5 609.3 311.5 609.6 309.5 609.8 307.5 609.9 305.5 610 303.5 610.1 301.5 610.1 299.5 610 297.5 610 295.5 609.8 293.5 609.7 291.5 609.6 291 609.5 289.5 609.2 287.5 608.9 285.5 608.6 283.5 608.2 281.5 607.8 279.5 607.6 279 607.2 277.5 606.7 275.5 606 273.5 605.6 272.4 605.3 271.5 604.5 269.5 603.7 267.7 602.5 265.5 601.7 264.1 601.3 263.5 600 261.5 598.4 259.6 597.7 258.7 596.6 257.6 595.7 256.7 594.5 255.6 593.7 254.9 591.9 253.6 589.7 252.1 588.8 251.6 587.7 251 585.7 249.9 584.9 249.6 583.8 249.1 581.8 248.3 579.8 247.6 577.8 247 575.8 246.4 573.8 246 571.9 245.6 569.8 245.2 567.8 244.9 565.8 244.6 563.9 244.4 561.9 244.3 559.9 244.2 557.9 244.1 555.9 244.1 553.9 244.1 551.9 244.2 549.9 244.3 547.9 244.5 545.9 244.8 544 245.2 542.9 245.6 542 245.8 540 246.6 538.4 247.6 537.6 249.6 537 251.6 536.5 253.6 536 255.2 536 257.6 535.9 259.6 535.9 261.5 535.9 263.5 535.8 265.5 535.8 267.5 535.8 269.5 535.7 271.5 535.7 273.5 535.7 275.5 535.6 277.5 535.6 279.5 535.6 281.5 535.5 283.5 535.5 285.5 535.5 287.5 535.4 289.5 535.4 291.5 535.4 293.5 535.3 295.5 535.3 297.5 535.3 299.5 535.2 301.5 535.2 303.5 535.2 305.5 535.1 307.5 535.1 309.5 535 311.5 535 313.5 534.9 315.5 534.9 317.5 534.8 319.5 534.7 321.5M696.7 115.7 695.2 115.8 693.2 115.9 691.2 116.1 689.2 116.2 687.2 116.3 685.2 116.4 683.3 116.5 681.3 116.7 679.3 116.8 677.3 116.9 675.3 117 673.3 117.1 671.3 117.2 669.3 117.3 667.3 117.4 665.3 117.5 663.4 117.7 662.5 117.7 661.4 119.5 660.5 121.7 659.9 123.7 659.5 125.7 659.4 126.3 659.2 127.7 658.9 129.7 658.8 131.7 658.7 133.7 658.6 135.7 658.6 137.7 658.6 139.7 658.7 141.7 658.8 143.7 659 145.7 659.2 147.7 659.4 149.2 659.7 151.7 660.1 153.7 660.4 155.7 660.9 157.7 661.4 159.6 661.9 161.7 662.6 163.7 663.3 165.7 664.1 167.6 665 169.6 665.3 170.4 666 171.6 667.2 173.6 668.5 175.6 669.3 176.7 670 177.6 671.3 179.1 671.8 179.6 673.3 181.1 673.9 181.6 675.3 182.8 676.4 183.6 677.3 184.3 679.3 185.6 681.3 186.7 683.1 187.6 685.2 188.6 687.2 189.3 688.1 189.6 689.2 190 691.2 190.6 693.2 191.1 695.2 191.6 697.2 192 699.2 192.4 701.2 192.7 703.2 192.9 705.1 193.1 707.1 193.2 709.1 193.4 711.1 193.4 713.1 193.4 715.1 193.4 717.1 193.3 719.1 193.1 721.1 192.9 723.1 192.6 725 192.2 726.9 191.6 729 190.8 730.8 189.6 731.1 187.6 731.2 185.6 731.4 183.6 731.5 181.6 731.6 179.6 731.7 177.6 731.8 175.6 731.9 173.6 732.1 171.6 732.2 169.6 732.3 167.6 732.4 165.7 732.6 163.7 732.7 161.7 732.9 159.7 733 157.7"/><path stroke="#ff0100" d="M534.8 321.5 536 322.7 538 322.6 540 322.5 542 322.5 544 322.4 545.9 322.3 547.9 322.3 549.9 322.2 551.9 322.2 553.9 322.1 555.9 322.1 557.9 322.1 559.9 322 561.9 322 563.9 321.9 565.8 321.9 567.8 321.9 569.8 321.8 571.8 321.8 573.8 321.8 575.8 321.7 577.8 321.7 579.8 321.6 581.8 321.6 583.8 321.6 585.7 321.5 587.7 321.5 588.4 321.5 589.7 321.2 591.7 320.7 593.7 320.2 595.7 319.8 597.3 319.5 597.5 317.5 597.4 315.5 597.2 313.5 596.9 311.5 596.5 309.5 596 307.5 595.7 306.3 595.5 305.5 594.9 303.5 594.2 301.5 593.7 300.1 593.5 299.5 592.7 297.5 591.9 295.5 590.9 293.5 590 291.5 589.7 291.1 588.9 289.5 587.7 287.5 586.5 285.5 585.7 284.4 585.1 283.5 583.8 281.6 582.1 279.5 581.8 279.1 580.4 277.5 579.8 276.9 578.5 275.5 577.8 274.9 576.4 273.5 575.8 273 574.1 271.5 571.8 269.8 569.8 268.3 568.7 267.5 567.8 267 565.8 265.8 565.4 265.5 563.9 264.7 561.9 263.6 559.9 262.7 557.9 261.8 557.3 261.5 555.9 261 553.9 260.2 551.9 259.6 549.9 258.9 547.9 258.4 545.9 257.9 544 257.6 542 257.3 540 257.2 538 257.4 537.3 259.6 536.6 261.5 536 263.3 536 265.5 535.9 267.5 535.9 269.5 535.9 271.5 535.8 273.5 535.8 275.5 535.8 277.5 535.7 279.5 535.7 281.5 535.7 283.5 535.6 285.5 535.6 287.5 535.5 289.5 535.5 291.5 535.5 293.5 535.4 295.5 535.4 297.5 535.4 299.5 535.3 301.5 535.3 303.5 535.2 305.5 535.2 307.5 535.2 309.5 535.1 311.5 535.1 313.5 535 315.5 534.9 317.5 534.8 319.5 534.8 321.5M702.6 115.7 701.2 115.8 699.2 116 697.2 116.1 695.2 116.2 693.2 116.4 691.2 116.5 689.2 116.6 687.2 116.8 685.2 116.9 683.3 117 681.3 117.1 679.3 117.2 677.3 117.4 675.3 117.5 673.3 117.6 671.4 117.7 671.3 118.8 671.2 119.7 671.2 121.7 671.3 122.5 671.4 123.7 671.7 125.7 672.1 127.7 672.6 129.7 673.1 131.7 673.3 132.2 673.7 133.7 674.4 135.7 675.1 137.7 675.3 138.2 675.9 139.7 676.7 141.7 677.3 143 677.6 143.7 678.6 145.7 679.3 147 679.6 147.7 680.8 149.7 681.3 150.5 682 151.7 683.3 153.5 684.8 155.7 685.2 156.3 686.4 157.7 687.2 158.7 688.1 159.7 689.2 160.9 689.9 161.7 691.2 162.9 692 163.7 693.2 164.8 694.2 165.7 695.2 166.4 696.8 167.6 697.2 168 699.2 169.4 701.2 170.7 702.7 171.6 703.2 171.9 705.1 173 706.4 173.6 707.1 174 709.1 175 710.6 175.6 711.1 175.8 713.1 176.6 715.1 177.4 715.8 177.6 717.1 178 719.1 178.6 721.1 179.2 723.1 179.6 725 180 727 180.2 729 180.3 731 180.1 731.2 177.6 731.3 175.6 731.4 173.6 731.5 171.6 731.7 169.6 731.8 167.6 731.9 165.7 732.1 163.7 732.2 161.7 732.3 159.7 732.5 157.7 732.6 155.7 732.8 153.7 732.9 151.7 733 151"/><path stroke="#ac0000" d="M534.9 321.5 536 322.6 538 322.5 540 322.4 542 322.3 544 322.2 545.9 322.1 547.9 322.1 549.9 322 551.9 322 553.9 321.9 555.9 321.8 557.9 321.8 559.9 321.8 561.9 321.7 563.9 321.7 565.8 321.6 567.8 321.6 569.8 321.5 571.7 321.5 573.8 320.6 575.8 319.9 576.9 319.5 575.8 318.2 575.1 317.5 573.8 316 573.3 315.5 571.8 313.7 569.9 311.5 568.2 309.5 567.8 309.1 566.4 307.5 565.8 306.8 564.7 305.5 563.9 304.6 562.9 303.5 561.9 302.4 561 301.5 559.9 300.3 559.2 299.5 557.9 298.2 557.2 297.5 555.9 296.1 555.3 295.5 553.9 294.1 553.3 293.5 551.9 292.2 551.3 291.5 549.9 290.2 549.2 289.5 547.9 288.3 547.1 287.5 545.9 286.4 545 285.5 544 284.6 542.9 283.5 542 282.7 540.8 281.5 540 280.8 538.7 279.5 538 278.8 537.5 279.5 536 281.2 535.9 283.5 535.9 285.5 535.9 287.5 535.8 289.5 535.8 291.5 535.7 293.5 535.7 295.5 535.7 297.5 535.6 299.5 535.6 301.5 535.5 303.5 535.5 305.5 535.4 307.5 535.4 309.5 535.3 311.5 535.2 313.5 535.2 315.5 535.1 317.5 535 319.5 534.9 321.5M714.6 115.7 713.1 115.9 711.1 116.1 709.1 116.3 707.1 116.5 705.1 116.6 703.2 116.8 701.2 117 699.2 117.1 697.2 117.3 695.2 117.4 693.2 117.6 691.5 117.7 693.2 119.6 695.1 121.7 696.8 123.7 697.2 124.1 698.5 125.7 699.2 126.4 700.3 127.7 701.2 128.7 702 129.7 703.2 131 703.8 131.7 705.1 133.2 705.6 133.7 707.1 135.4 709.1 137.5 711.1 139.6 713.1 141.7 715.1 143.7 717.1 145.6 719.1 147.6 721.1 149.5 723.1 151.3 723.4 151.7 725 153.2 725.5 153.7 727 155.1 727.6 155.7 729 157 729.7 157.7 731 158.9 731.1 157.7 731.3 155.7 731.4 153.7 731.6 151.7 731.8 149.7 732 147.7 732.1 145.7 732.3 143.7 732.5 141.7 732.8 139.7 733 137.7"/></g>
<rect x="740" y="114" width="10" height="211" fill="url(#cb)"/>
<g><rect x="528" y="114" width="1" height="211" fill="#000"/><rect x="520" y="324" width="8" height="1" fill="#000"/><rect x="524" y="314" width="4" height="1" fill="#000"/><rect x="522" y="303" width="6" height="1" fill="#000"/><rect x="524" y="293" width="4" height="1" fill="#000"/><rect x="520" y="282" width="8" height="1" fill="#000"/><rect x="524" y="272" width="4" height="1" fill="#000"/><rect x="522" y="261" width="6" height="1" fill="#000"/><rect x="524" y="251" width="4" height="1" fill="#000"/><rect x="520" y="240" width="8" height="1" fill="#000"/><rect x="524" y="230" width="4" height="1" fill="#000"/><rect x="522" y="219" width="6" height="1" fill="#000"/><rect x="524" y="209" width="4" height="1" fill="#000"/><rect x="520" y="198" width="8" height="1" fill="#000"/><rect x="524" y="188" width="4" height="1" fill="#000"/><rect x="522" y="177" width="6" height="1" fill="#000"/><rect x="524" y="167" width="4" height="1" fill="#000"/><rect x="520" y="156" width="8" height="1" fill="#000"/><rect x="524" y="145" width="4" height="1" fill="#000"/><rect x="522" y="135" width="6" height="1" fill="#000"/><rect x="524" y="125" width="4" height="1" fill="#000"/><rect x="520" y="114" width="8" height="1" fill="#000"/><rect x="533" y="329" width="203" height="1" fill="#000"/><rect x="533" y="329" width="1" height="8" fill="#000"/><rect x="543" y="329" width="1" height="4" fill="#000"/><rect x="553" y="329" width="1" height="6" fill="#000"/><rect x="563" y="329" width="1" height="4" fill="#000"/><rect x="573" y="329" width="1" height="8" fill="#000"/><rect x="584" y="329" width="1" height="4" fill="#000"/><rect x="594" y="329" width="1" height="6" fill="#000"/><rect x="604" y="329" width="1" height="4" fill="#000"/><rect x="614" y="329" width="1" height="8" fill="#000"/><rect x="624" y="329" width="1" height="4" fill="#000"/><rect x="634" y="329" width="1" height="6" fill="#000"/><rect x="644" y="329" width="1" height="4" fill="#000"/><rect x="654" y="329" width="1" height="8" fill="#000"/><rect x="664" y="329" width="1" height="4" fill="#000"/><rect x="674" y="329" width="1" height="6" fill="#000"/><rect x="685" y="329" width="1" height="4" fill="#000"/><rect x="695" y="329" width="1" height="8" fill="#000"/><rect x="705" y="329" width="1" height="4" fill="#000"/><rect x="715" y="329" width="1" height="6" fill="#000"/><rect x="725" y="329" width="1" height="4" fill="#000"/><rect x="735" y="329" width="1" height="8" fill="#000"/><rect x="752" y="114" width="1" height="211" fill="#000"/><rect x="752" y="324" width="8" height="1" fill="#000"/><rect x="752" y="317" width="4" height="1" fill="#000"/><rect x="752" y="310" width="6" height="1" fill="#000"/><rect x="752" y="303" width="4" height="1" fill="#000"/><rect x="752" y="296" width="8" height="1" fill="#000"/><rect x="752" y="289" width="4" height="1" fill="#000"/><rect x="752" y="281" width="6" height="1" fill="#000"/><rect x="752" y="274" width="4" height="1" fill="#000"/><rect x="752" y="267" width="8" height="1" fill="#000"/><rect x="752" y="260" width="4" height="1" fill="#000"/><rect x="752" y="253" width="6" height="1" fill="#000"/><rect x="752" y="246" width="4" height="1" fill="#000"/><rect x="752" y="239" width="8" height="1" fill="#000"/><rect x="752" y="232" width="4" height="1" fill="#000"/><rect x="752" y="225" width="6" height="1" fill="#000"/><rect x="752" y="218" width="4" height="1" fill="#000"/><rect x="752" y="210" width="8" height="1" fill="#000"/><rect x="752" y="203" width="4" height="1" fill="#000"/><rect x="752" y="196" width="6" height="1" fill="#000"/><rect x="752" y="189" width="4" height="1" fill="#000"/><rect x="752" y="182" width="8" height="1" fill="#000"/><rect x="752" y="175" width="4" height="1" fill="#000"/><rect x="752" y="168" width="6" height="1" fill="#000"/><rect x="752" y="161" width="4" height="1" fill="#000"/><rect x="752" y="154" width="8" height="1" fill="#000"/><rect x="752" y="147" width="4" height="1" fill="#000"/><rect x="752" y="139" width="6" height="1" fill="#000"/><rect x="752" y="132" width="4" height="1" fill="#000"/><rect x="752" y="125" width="8" height="1" fill="#000"/><rect x="752" y="118" width="4" height="1" fill="#000"/></g><g fill="#000" stroke="#000" stroke-width="0.25" font-family="Liberation Sans, sans-serif"><text x="514.5" y="328.8" text-anchor="end" font-size="12" font-weight="normal">0</text><text x="514.5" y="286.8" text-anchor="end" font-size="12" font-weight="normal">0.2</text><text x="514.5" y="244.8" text-anchor="end" font-size="12" font-weight="normal">0.4</text><text x="514.5" y="202.8" text-anchor="end" font-size="12" font-weight="normal">0.6</text><text x="514.5" y="160.8" text-anchor="end" font-size="12" font-weight="normal">0.8</text><text x="514.5" y="118.8" text-anchor="end" font-size="12" font-weight="normal">1</text><text x="533.5" y="352" text-anchor="middle" font-size="12" font-weight="normal">0</text><text x="573.5" y="352" text-anchor="middle" font-size="12" font-weight="normal">0.2</text><text x="614.5" y="352" text-anchor="middle" font-size="12" font-weight="normal">0.4</text><text x="654.5" y="352" text-anchor="middle" font-size="12" font-weight="normal">0.6</text><text x="695.5" y="352" text-anchor="middle" font-size="12" font-weight="normal">0.8</text><text x="735.5" y="352" text-anchor="middle" font-size="12" font-weight="normal">1</text><text x="766" y="328.8" text-anchor="start" font-size="12" font-weight="normal">0</text><text x="766" y="300.8" text-anchor="start" font-size="12" font-weight="normal">0.2</text><text x="766" y="271.8" text-anchor="start" font-size="12" font-weight="normal">0.4</text><text x="766" y="243.8" text-anchor="start" font-size="12" font-weight="normal">0.6</text><text x="766" y="214.8" text-anchor="start" font-size="12" font-weight="normal">0.8</text><text x="766" y="186.8" text-anchor="start" font-size="12" font-weight="normal">1</text><text x="766" y="158.8" text-anchor="start" font-size="12" font-weight="normal">1.2</text><text x="766" y="129.8" text-anchor="start" font-size="12" font-weight="normal">1.4</text><text x="640.5" y="100" text-anchor="middle" font-size="19" font-weight="bold">PDF</text><text x="633.5" y="370" text-anchor="middle" font-size="16.5" font-weight="bold">x1</text><text x="0" y="0" text-anchor="middle" font-size="16.5" font-weight="bold" transform="translate(491.5,219) rotate(-90)">x2</text><text x="0" y="0" text-anchor="middle" font-size="17" font-weight="bold" transform="translate(790.5,219.5) rotate(90)">Density</text></g>
</svg>
</body></html>
